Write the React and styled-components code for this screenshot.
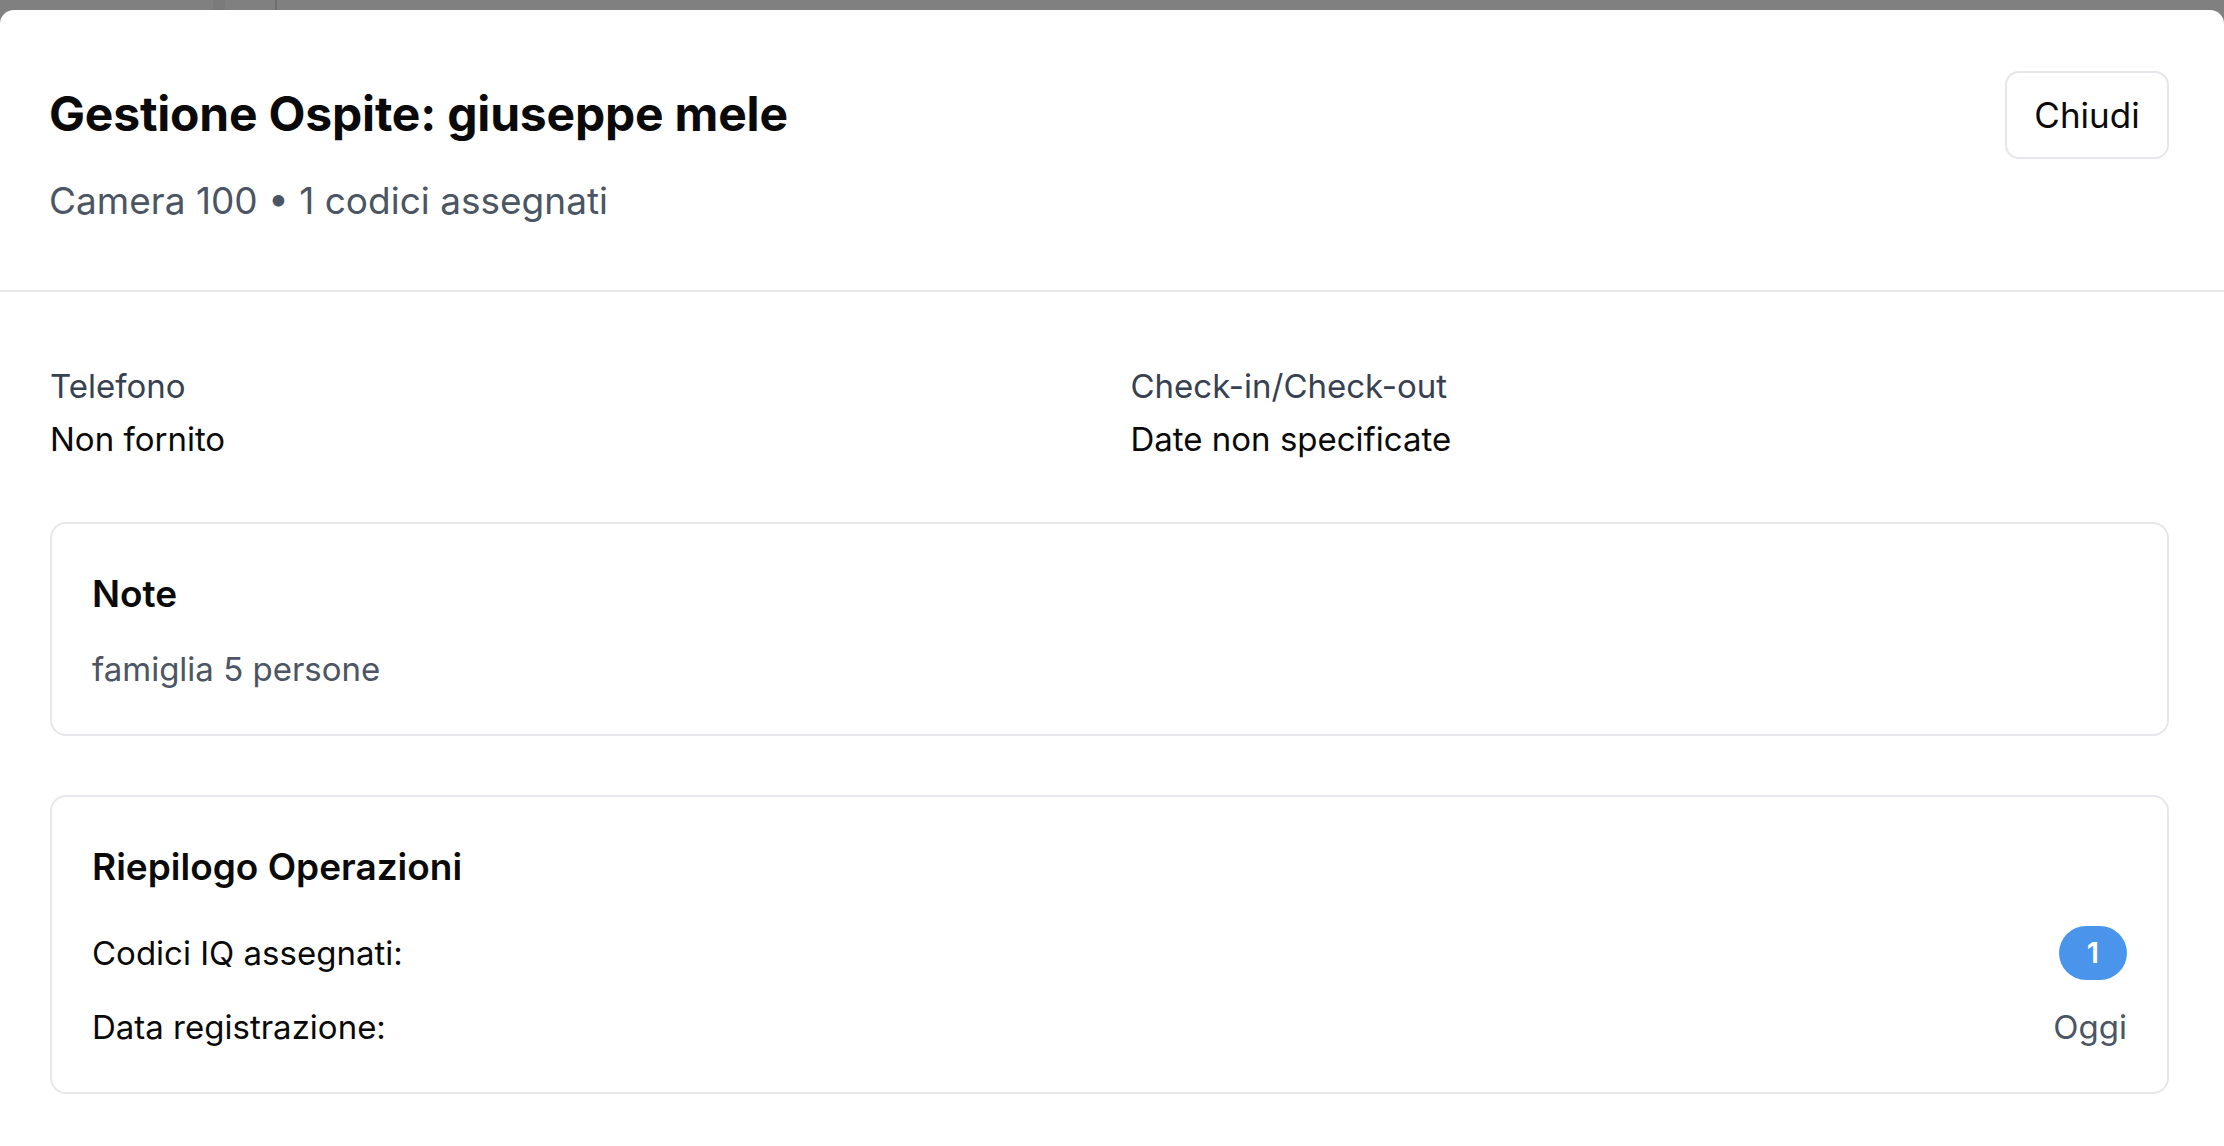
import React from 'react';
import styled, { createGlobalStyle } from 'styled-components';

const GlobalStyle = createGlobalStyle`
  html, body {
    margin: 0;
    padding: 0;
    background: #808080;
  }
  body {
    font-family: Inter, "Noto Sans", "Liberation Sans", sans-serif;
    color: #0a0a0a;
    -webkit-font-smoothing: antialiased;
  }
  * { box-sizing: border-box; }
`;

// backdrop strip visible above the sheet
const Backdrop = styled.div`
  height: 10px;
  display: flex;
  background: #808080;
`;

const BackdropSeam = styled.div`
  width: ${(p) => p.width}px;
  margin-left: ${(p) => p.offset}px;
  background: ${(p) => p.shade};
`;

const Sheet = styled.div`
  background: #ffffff;
  border-radius: 14px 14px 0 0;
  min-height: 1136px;
`;

const Header = styled.header`
  display: flex;
  justify-content: space-between;
  align-items: flex-start;
  padding: 61px 55px 61px 49px;
  border-bottom: 2px solid #e5e7eb;
`;

const TitleBlock = styled.div`
  padding-top: 14px;
`;

const Title = styled.h1`
  margin: 0;
  font-size: 48px;
  line-height: 58px;
  font-weight: 700;
  letter-spacing: -0.2px;
`;

const Subtitle = styled.p`
  margin: 30px 0 0;
  font-size: 37px;
  line-height: 56px;
  color: #4b5563;
`;

const CloseButton = styled.button`
  width: 164px;
  height: 88px;
  background: #fff;
  border: 2px solid #e5e7eb;
  border-radius: 14px;
  font-family: inherit;
  font-size: 35px;
  color: #0a0a0a;
  cursor: pointer;
`;

const Body = styled.div`
  padding: 70px 55px 0 50px;
  display: flex;
  flex-direction: column;
  gap: 59px;
`;

const InfoGrid = styled.div`
  display: grid;
  grid-template-columns: 1fr 1fr;
  column-gap: 42px;
`;

const InfoLabel = styled.div`
  font-size: 33px;
  line-height: 48px;
  color: #374151;
`;

const InfoValue = styled.div`
  margin-top: 5px;
  font-size: 33px;
  line-height: 48px;
  color: #0a0a0a;
`;

const Card = styled.section`
  border: 2px solid #e5e7eb;
  border-radius: 16px;
  padding: 43px 40px 41px;
`;

const CardTitle = styled.h2`
  margin: 0;
  font-size: 37px;
  line-height: 54px;
  font-weight: 600;
`;

const NoteText = styled.p`
  margin: 24px 0 0;
  font-size: 33px;
  line-height: 48px;
  color: #4b5563;
`;

const SummaryList = styled.div`
  margin-top: 32px;
  display: flex;
  flex-direction: column;
  gap: 23px;
`;

const SummaryRow = styled.div`
  display: flex;
  justify-content: space-between;
  align-items: center;
  min-height: ${(p) => (p.tall ? 54 : 48)}px;
  font-size: 33px;
  line-height: 48px;
`;

const SummaryValue = styled.span`
  color: #4b5563;
`;

const CountBadge = styled.span`
  display: inline-flex;
  align-items: center;
  justify-content: center;
  min-width: 68px;
  height: 54px;
  padding: 0 20px;
  border-radius: 27px;
  background: #4a95eb;
  color: #fff;
  font-size: 29px;
  font-weight: 600;
`;

export default function App() {
  const guest = {
    name: 'giuseppe mele',
    room: 100,
    codes: 1,
    phone: 'Non fornito',
    dates: 'Date non specificate',
    notes: 'famiglia 5 persone',
  };

  return (
    <>
      <GlobalStyle />
      <Backdrop>
        <BackdropSeam offset={213} width={12} shade="#7b7b7b" />
        <BackdropSeam offset={50} width={2} shade="#6f6f6f" />
      </Backdrop>
      <Sheet>
        <Header>
          <TitleBlock>
            <Title>Gestione Ospite: {guest.name}</Title>
            <Subtitle>
              Camera {guest.room} • {guest.codes} codici assegnati
            </Subtitle>
          </TitleBlock>
          <CloseButton>Chiudi</CloseButton>
        </Header>
        <Body>
          <InfoGrid>
            <div>
              <InfoLabel>Telefono</InfoLabel>
              <InfoValue>{guest.phone}</InfoValue>
            </div>
            <div>
              <InfoLabel>Check-in/Check-out</InfoLabel>
              <InfoValue>{guest.dates}</InfoValue>
            </div>
          </InfoGrid>
          <Card>
            <CardTitle>Note</CardTitle>
            <NoteText>{guest.notes}</NoteText>
          </Card>
          <Card>
            <CardTitle>Riepilogo Operazioni</CardTitle>
            <SummaryList>
              <SummaryRow tall>
                <span>Codici IQ assegnati:</span>
                <CountBadge>{guest.codes}</CountBadge>
              </SummaryRow>
              <SummaryRow>
                <span>Data registrazione:</span>
                <SummaryValue>Oggi</SummaryValue>
              </SummaryRow>
            </SummaryList>
          </Card>
        </Body>
      </Sheet>
    </>
  );
}
